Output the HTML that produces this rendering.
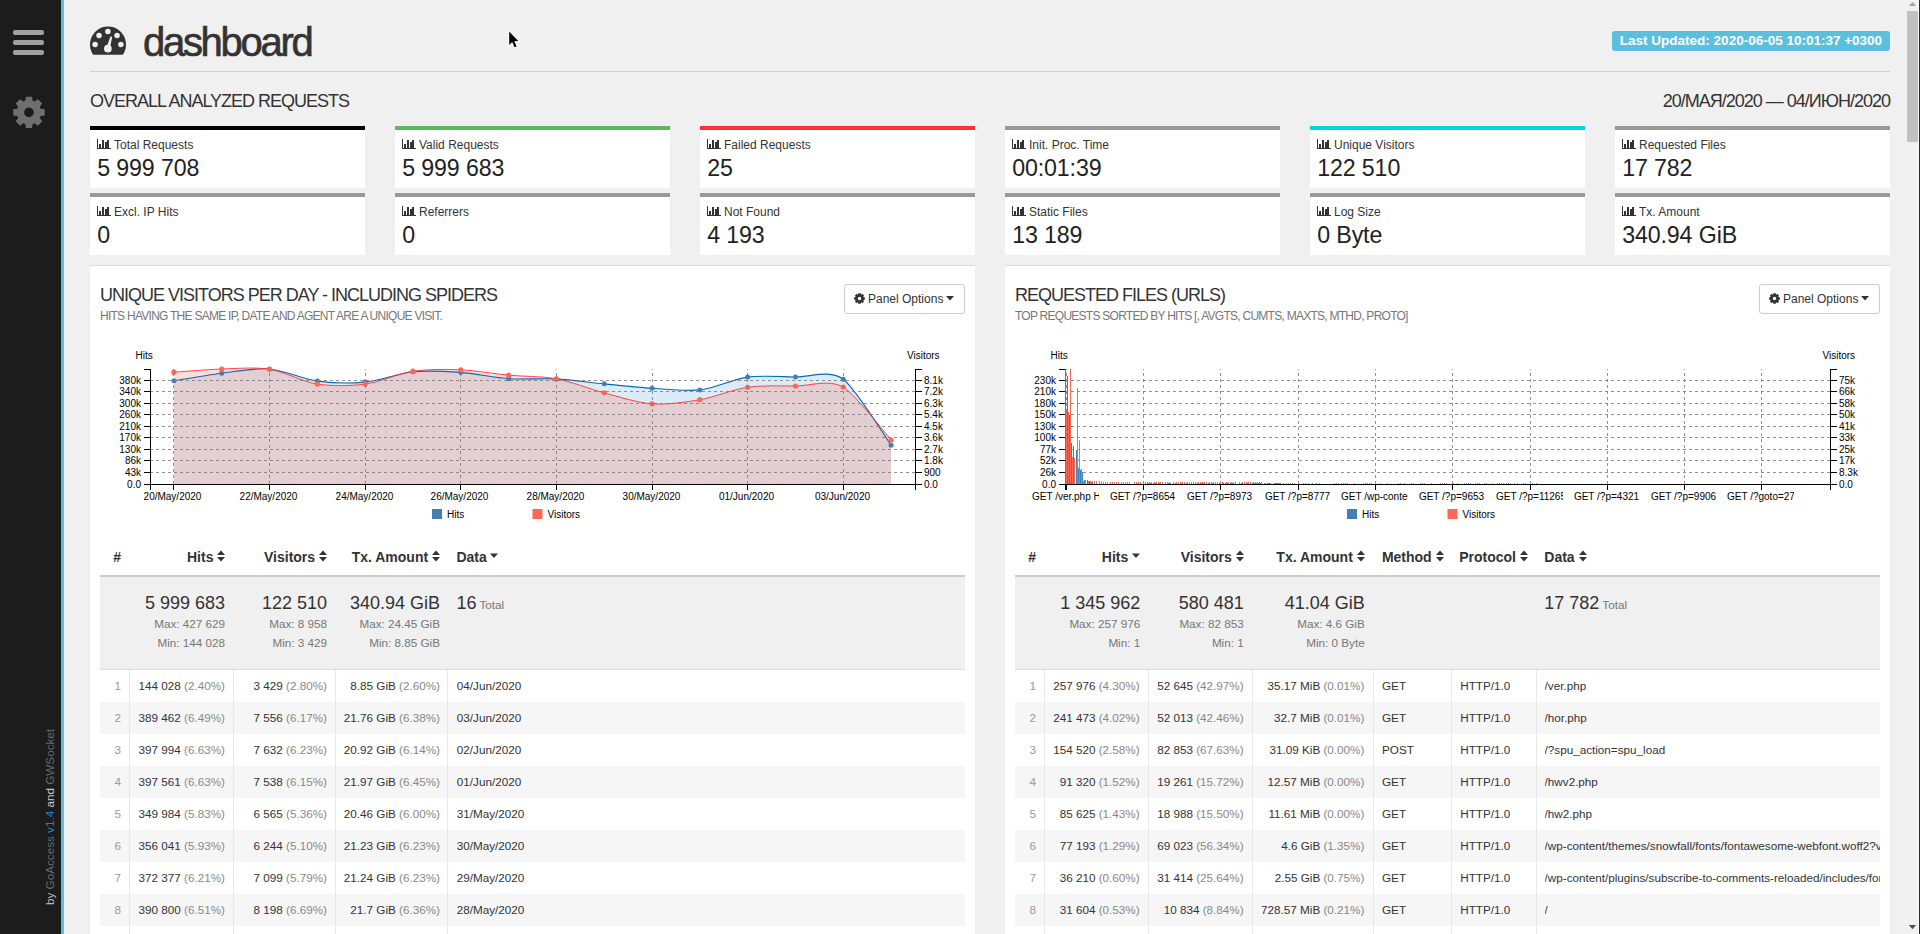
<!DOCTYPE html><html><head><meta charset="utf-8"><style>
*{box-sizing:border-box;margin:0;padding:0}
html,body{width:1920px;height:934px;overflow:hidden;background:#f0f0f0;font-family:"Liberation Sans", sans-serif;color:#333}
.abs{position:absolute}
.sb{position:absolute;left:0;top:0;width:61px;height:934px;background:#1c1c1c}
.sbb{position:absolute;left:61px;top:0;width:3px;height:934px;background:#5bc0de}
.bar{position:absolute;left:13px;width:31px;height:5px;border-radius:2px;background:#a0a0a0}
.card{position:absolute;width:275px;height:62px;background:#fff;border-top:4px solid #999}
.cl{position:absolute;left:24px;top:8px;font-size:12px;line-height:14px;color:#333;white-space:nowrap}
.bi{position:absolute;left:7px;top:9px}
.cv{position:absolute;left:7.2px;top:22.6px;font-size:23.2px;letter-spacing:-0.12px;line-height:30px;color:#222;white-space:nowrap}
.panel{position:absolute;top:265px;width:885px;height:700px;background:#fff;border-top:1px solid #ddd}
.ptitle{position:absolute;left:10px;top:19px;font-size:18px;letter-spacing:-1px;color:#333;white-space:nowrap}
.psub{position:absolute;left:10px;top:43px;font-size:12px;letter-spacing:-0.74px;color:#777;white-space:nowrap}
.btn{position:absolute;top:18px;width:121px;height:30px;border:1px solid #ccc;border-radius:3px;font-size:12px;line-height:28px;padding-left:9px;color:#333;white-space:nowrap}
.g{stroke:#777;stroke-dasharray:3,3;stroke-width:1;opacity:.8}
.ax{stroke:#000;fill:none;stroke-width:1}
.t{font-family:"Liberation Sans", sans-serif;font-size:10px;fill:#000}
.xl{position:absolute;top:490px;width:67px;height:14px;overflow:hidden;font-size:10px;line-height:14px;text-align:center;white-space:nowrap;color:#000}
.tbl{position:absolute;top:535px;height:400px}
.th{position:absolute;top:13px;font-size:13px;font-weight:bold;line-height:16px;white-space:nowrap;color:#333}
.srt{vertical-align:0px}
.tx{position:absolute;line-height:1;white-space:nowrap;color:#333}
.b{font-weight:bold}
.mut{color:#888}
.mx{color:#777}
</style></head><body>

<div class="sb"></div><div class="sbb"></div>
<div class="bar" style="top:30px"></div><div class="bar" style="top:40px"></div><div class="bar" style="top:50px"></div>
<svg class="abs" style="left:0;top:0" width="61" height="140"><path fill-rule="evenodd" fill="#6f6f6f" d="M25.25,100.80 L25.90,96.70 L32.00,96.70 L32.65,100.80 L34.54,101.58 L37.89,99.14 L42.21,103.46 L39.77,106.81 L40.55,108.70 L44.65,109.35 L44.65,115.45 L40.55,116.10 L39.77,117.99 L42.21,121.34 L37.89,125.66 L34.54,123.22 L32.65,124.00 L32.00,128.10 L25.90,128.10 L25.25,124.00 L23.36,123.22 L20.01,125.66 L15.69,121.34 L18.13,117.99 L17.35,116.10 L13.25,115.45 L13.25,109.35 L17.35,108.70 L18.13,106.81 L15.69,103.46 L20.01,99.14 L23.36,101.58Z M24.10,112.40 a4.85,4.85 0 1,0 9.70,0 a4.85,4.85 0 1,0 -9.70,0Z"/></svg>
<div class="abs" style="left:44px;top:905px;transform:rotate(-90deg);transform-origin:0 0;font-size:11.7px;line-height:12px;white-space:nowrap;color:#bbb">by <span style="color:#6a6a6a">GoAccess</span> <span style="color:#2a80d0">v1.4</span> <span style="color:#ccc">and</span> <span style="color:#6a6a6a">GWSocket</span></div>
<svg class="abs" style="left:0;top:0" width="140" height="70"><path fill="#333" d="M93.1,54.7 A18,18 0 1,1 122.9,54.7 Z"/>
<g fill="#f0f0f0"><circle cx="107.9" cy="31.6" r="2.75"/><circle cx="99.06" cy="35.6" r="2.75"/><circle cx="117.05" cy="35.6" r="2.75"/><circle cx="95.1" cy="44.6" r="2.75"/><circle cx="120.9" cy="44.6" r="2.75"/><circle cx="107.9" cy="48.7" r="3.85"/><path d="M106.2,48.5 L110.4,36.4 L112.2,36.8 L109.8,48.8Z"/></g></svg>
<div class="abs" style="left:143px;top:17px;font-size:40px;line-height:46px;letter-spacing:-2.3px;-webkit-text-stroke:0.65px #333;margin-top:1.5px;color:#333">dashboard</div>
<div class="abs" style="left:90px;top:71px;width:1800px;height:1px;background:#d0d0d0"></div>
<div class="abs" style="left:1612px;top:31px;width:278px;height:20px;border-radius:3px;background:#5bc0de;color:#fff;font-weight:bold;font-size:13.5px;line-height:20px;text-align:center;white-space:nowrap">Last Updated: 2020-06-05 10:01:37 +0300</div>
<div class="abs" style="left:90px;top:91px;font-size:18px;line-height:20px;letter-spacing:-1px;color:#333;white-space:nowrap">OVERALL ANALYZED REQUESTS</div>
<div class="abs" style="right:30px;top:91px;font-size:18px;line-height:20px;letter-spacing:-1px;color:#333;white-space:nowrap">20/МАЯ/2020 — 04/ИЮН/2020</div>
<div class="card" style="left:90px;top:126px;border-top-color:#000"><svg class="bi" width="15" height="11" viewBox="0 0 15 11" shape-rendering="crispEdges"><rect x="0" y="0" width="1" height="10" fill="#333"/><rect x="0" y="9" width="14" height="1" fill="#333"/><rect x="2" y="5" width="2" height="4" fill="#333"/><rect x="5" y="1.4" width="2" height="7.6" fill="#333"/><rect x="7.6" y="3" width="2" height="6" fill="#333"/><rect x="10" y="1" width="2" height="8" fill="#333"/></svg><div class="cl">Total Requests</div><div class="cv">5 999 708</div></div>
<div class="card" style="left:395px;top:126px;border-top-color:#5cb85c"><svg class="bi" width="15" height="11" viewBox="0 0 15 11" shape-rendering="crispEdges"><rect x="0" y="0" width="1" height="10" fill="#333"/><rect x="0" y="9" width="14" height="1" fill="#333"/><rect x="2" y="5" width="2" height="4" fill="#333"/><rect x="5" y="1.4" width="2" height="7.6" fill="#333"/><rect x="7.6" y="3" width="2" height="6" fill="#333"/><rect x="10" y="1" width="2" height="8" fill="#333"/></svg><div class="cl">Valid Requests</div><div class="cv">5 999 683</div></div>
<div class="card" style="left:700px;top:126px;border-top-color:#ff303e"><svg class="bi" width="15" height="11" viewBox="0 0 15 11" shape-rendering="crispEdges"><rect x="0" y="0" width="1" height="10" fill="#333"/><rect x="0" y="9" width="14" height="1" fill="#333"/><rect x="2" y="5" width="2" height="4" fill="#333"/><rect x="5" y="1.4" width="2" height="7.6" fill="#333"/><rect x="7.6" y="3" width="2" height="6" fill="#333"/><rect x="10" y="1" width="2" height="8" fill="#333"/></svg><div class="cl">Failed Requests</div><div class="cv">25</div></div>
<div class="card" style="left:1005px;top:126px;border-top-color:#999"><svg class="bi" width="15" height="11" viewBox="0 0 15 11" shape-rendering="crispEdges"><rect x="0" y="0" width="1" height="10" fill="#333"/><rect x="0" y="9" width="14" height="1" fill="#333"/><rect x="2" y="5" width="2" height="4" fill="#333"/><rect x="5" y="1.4" width="2" height="7.6" fill="#333"/><rect x="7.6" y="3" width="2" height="6" fill="#333"/><rect x="10" y="1" width="2" height="8" fill="#333"/></svg><div class="cl">Init. Proc. Time</div><div class="cv">00:01:39</div></div>
<div class="card" style="left:1310px;top:126px;border-top-color:#00d6e0"><svg class="bi" width="15" height="11" viewBox="0 0 15 11" shape-rendering="crispEdges"><rect x="0" y="0" width="1" height="10" fill="#333"/><rect x="0" y="9" width="14" height="1" fill="#333"/><rect x="2" y="5" width="2" height="4" fill="#333"/><rect x="5" y="1.4" width="2" height="7.6" fill="#333"/><rect x="7.6" y="3" width="2" height="6" fill="#333"/><rect x="10" y="1" width="2" height="8" fill="#333"/></svg><div class="cl">Unique Visitors</div><div class="cv">122 510</div></div>
<div class="card" style="left:1615px;top:126px;border-top-color:#999"><svg class="bi" width="15" height="11" viewBox="0 0 15 11" shape-rendering="crispEdges"><rect x="0" y="0" width="1" height="10" fill="#333"/><rect x="0" y="9" width="14" height="1" fill="#333"/><rect x="2" y="5" width="2" height="4" fill="#333"/><rect x="5" y="1.4" width="2" height="7.6" fill="#333"/><rect x="7.6" y="3" width="2" height="6" fill="#333"/><rect x="10" y="1" width="2" height="8" fill="#333"/></svg><div class="cl">Requested Files</div><div class="cv">17 782</div></div>
<div class="card" style="left:90px;top:193px;border-top-color:#999"><svg class="bi" width="15" height="11" viewBox="0 0 15 11" shape-rendering="crispEdges"><rect x="0" y="0" width="1" height="10" fill="#333"/><rect x="0" y="9" width="14" height="1" fill="#333"/><rect x="2" y="5" width="2" height="4" fill="#333"/><rect x="5" y="1.4" width="2" height="7.6" fill="#333"/><rect x="7.6" y="3" width="2" height="6" fill="#333"/><rect x="10" y="1" width="2" height="8" fill="#333"/></svg><div class="cl">Excl. IP Hits</div><div class="cv">0</div></div>
<div class="card" style="left:395px;top:193px;border-top-color:#999"><svg class="bi" width="15" height="11" viewBox="0 0 15 11" shape-rendering="crispEdges"><rect x="0" y="0" width="1" height="10" fill="#333"/><rect x="0" y="9" width="14" height="1" fill="#333"/><rect x="2" y="5" width="2" height="4" fill="#333"/><rect x="5" y="1.4" width="2" height="7.6" fill="#333"/><rect x="7.6" y="3" width="2" height="6" fill="#333"/><rect x="10" y="1" width="2" height="8" fill="#333"/></svg><div class="cl">Referrers</div><div class="cv">0</div></div>
<div class="card" style="left:700px;top:193px;border-top-color:#999"><svg class="bi" width="15" height="11" viewBox="0 0 15 11" shape-rendering="crispEdges"><rect x="0" y="0" width="1" height="10" fill="#333"/><rect x="0" y="9" width="14" height="1" fill="#333"/><rect x="2" y="5" width="2" height="4" fill="#333"/><rect x="5" y="1.4" width="2" height="7.6" fill="#333"/><rect x="7.6" y="3" width="2" height="6" fill="#333"/><rect x="10" y="1" width="2" height="8" fill="#333"/></svg><div class="cl">Not Found</div><div class="cv">4 193</div></div>
<div class="card" style="left:1005px;top:193px;border-top-color:#999"><svg class="bi" width="15" height="11" viewBox="0 0 15 11" shape-rendering="crispEdges"><rect x="0" y="0" width="1" height="10" fill="#333"/><rect x="0" y="9" width="14" height="1" fill="#333"/><rect x="2" y="5" width="2" height="4" fill="#333"/><rect x="5" y="1.4" width="2" height="7.6" fill="#333"/><rect x="7.6" y="3" width="2" height="6" fill="#333"/><rect x="10" y="1" width="2" height="8" fill="#333"/></svg><div class="cl">Static Files</div><div class="cv">13 189</div></div>
<div class="card" style="left:1310px;top:193px;border-top-color:#999"><svg class="bi" width="15" height="11" viewBox="0 0 15 11" shape-rendering="crispEdges"><rect x="0" y="0" width="1" height="10" fill="#333"/><rect x="0" y="9" width="14" height="1" fill="#333"/><rect x="2" y="5" width="2" height="4" fill="#333"/><rect x="5" y="1.4" width="2" height="7.6" fill="#333"/><rect x="7.6" y="3" width="2" height="6" fill="#333"/><rect x="10" y="1" width="2" height="8" fill="#333"/></svg><div class="cl">Log Size</div><div class="cv">0 Byte</div></div>
<div class="card" style="left:1615px;top:193px;border-top-color:#999"><svg class="bi" width="15" height="11" viewBox="0 0 15 11" shape-rendering="crispEdges"><rect x="0" y="0" width="1" height="10" fill="#333"/><rect x="0" y="9" width="14" height="1" fill="#333"/><rect x="2" y="5" width="2" height="4" fill="#333"/><rect x="5" y="1.4" width="2" height="7.6" fill="#333"/><rect x="7.6" y="3" width="2" height="6" fill="#333"/><rect x="10" y="1" width="2" height="8" fill="#333"/></svg><div class="cl">Tx. Amount</div><div class="cv">340.94 GiB</div></div>
<div class="panel" style="left:90px"><div class="ptitle">UNIQUE VISITORS PER DAY - INCLUDING SPIDERS</div><div class="psub">HITS HAVING THE SAME IP, DATE AND AGENT ARE A UNIQUE VISIT.</div><div class="btn" style="left:754px"><svg width="11" height="11" viewBox="0 0 11 11" style="vertical-align:-1px;margin-right:3px"><path fill-rule="evenodd" fill="#333" d="M4.00,1.70 L4.20,0.20 L6.80,0.20 L7.00,1.70 L7.13,1.75 L8.33,0.83 L10.17,2.67 L9.25,3.87 L9.30,4.00 L10.80,4.20 L10.80,6.80 L9.30,7.00 L9.25,7.13 L10.17,8.33 L8.33,10.17 L7.13,9.25 L7.00,9.30 L6.80,10.80 L4.20,10.80 L4.00,9.30 L3.87,9.25 L2.67,10.17 L0.83,8.33 L1.75,7.13 L1.70,7.00 L0.20,6.80 L0.20,4.20 L1.70,4.00 L1.75,3.87 L0.83,2.67 L2.67,0.83 L3.87,1.75Z M3.80,5.50 a1.70,1.70 0 1,0 3.40,0 a1.70,1.70 0 1,0 -3.40,0Z"/></svg>Panel Options<svg width="8" height="5" viewBox="0 0 8 5" style="vertical-align:2px;margin-left:3px"><path d="M0,0 L8,0 L4,4.5Z" fill="#333"/></svg></div></div>
<div class="panel" style="left:1005px"><div class="ptitle">REQUESTED FILES (URLS)</div><div class="psub">TOP REQUESTS SORTED BY HITS [, AVGTS, CUMTS, MAXTS, MTHD, PROTO]</div><div class="btn" style="left:754px"><svg width="11" height="11" viewBox="0 0 11 11" style="vertical-align:-1px;margin-right:3px"><path fill-rule="evenodd" fill="#333" d="M4.00,1.70 L4.20,0.20 L6.80,0.20 L7.00,1.70 L7.13,1.75 L8.33,0.83 L10.17,2.67 L9.25,3.87 L9.30,4.00 L10.80,4.20 L10.80,6.80 L9.30,7.00 L9.25,7.13 L10.17,8.33 L8.33,10.17 L7.13,9.25 L7.00,9.30 L6.80,10.80 L4.20,10.80 L4.00,9.30 L3.87,9.25 L2.67,10.17 L0.83,8.33 L1.75,7.13 L1.70,7.00 L0.20,6.80 L0.20,4.20 L1.70,4.00 L1.75,3.87 L0.83,2.67 L2.67,0.83 L3.87,1.75Z M3.80,5.50 a1.70,1.70 0 1,0 3.40,0 a1.70,1.70 0 1,0 -3.40,0Z"/></svg>Panel Options<svg width="8" height="5" viewBox="0 0 8 5" style="vertical-align:2px;margin-left:3px"><path d="M0,0 L8,0 L4,4.5Z" fill="#333"/></svg></div></div>
<svg style="position:absolute;left:0;top:0" width="1920" height="934">
<path d="M173.91,380.71Q212.16,374.37 221.72,373.20C236.06,371.45 255.19,367.81 269.53,369.00C283.88,370.19 303.00,379.14 317.34,381.11C331.69,383.08 350.81,383.50 365.16,382.10C379.50,380.71 398.62,373.26 412.97,371.80C427.31,370.35 446.44,371.36 460.78,372.40C475.12,373.43 494.25,377.71 508.59,378.69C522.94,379.67 542.06,378.13 556.41,378.90C570.75,379.68 589.88,382.46 604.22,383.86C618.56,385.26 637.69,387.35 652.03,388.25C666.38,389.16 685.50,391.56 699.84,389.88C714.19,388.21 733.31,379.02 747.66,377.09C762.00,375.15 781.12,376.64 795.47,376.97C809.81,377.30 828.94,369.02 843.28,379.26Q852.84,386.09 891.09,445.27L891.09,484L173.91,484Z" fill="#007BC3" fill-opacity="0.14"/>
<path d="M173.91,372.20Q212.16,369.30 221.72,369.00C236.06,368.56 255.19,366.97 269.53,369.23C283.88,371.50 303.00,381.87 317.34,384.10C331.69,386.33 350.81,386.03 365.16,384.10C379.50,382.16 398.62,373.34 412.97,371.20C427.31,369.05 446.44,369.20 460.78,369.80C475.12,370.40 494.25,373.86 508.59,375.20C522.94,376.54 542.06,376.11 556.41,378.76C570.75,381.41 589.88,389.10 604.22,392.87C618.56,396.63 637.69,402.81 652.03,403.84C666.38,404.87 685.50,402.21 699.84,399.72C714.19,397.23 733.31,389.28 747.66,387.23C762.00,385.17 781.12,386.06 795.47,386.02C809.81,385.99 828.94,378.90 843.28,387.00Q852.84,392.39 891.09,439.98L891.09,484L173.91,484Z" fill="#FF6854" fill-opacity="0.22"/>
<path d="M173.91,380.71Q212.16,374.37 221.72,373.20C236.06,371.45 255.19,367.81 269.53,369.00C283.88,370.19 303.00,379.14 317.34,381.11C331.69,383.08 350.81,383.50 365.16,382.10C379.50,380.71 398.62,373.26 412.97,371.80C427.31,370.35 446.44,371.36 460.78,372.40C475.12,373.43 494.25,377.71 508.59,378.69C522.94,379.67 542.06,378.13 556.41,378.90C570.75,379.68 589.88,382.46 604.22,383.86C618.56,385.26 637.69,387.35 652.03,388.25C666.38,389.16 685.50,391.56 699.84,389.88C714.19,388.21 733.31,379.02 747.66,377.09C762.00,375.15 781.12,376.64 795.47,376.97C809.81,377.30 828.94,369.02 843.28,379.26Q852.84,386.09 891.09,445.27" fill="none" stroke="#0868b8" stroke-width="1.1"/>
<path d="M173.91,372.20Q212.16,369.30 221.72,369.00C236.06,368.56 255.19,366.97 269.53,369.23C283.88,371.50 303.00,381.87 317.34,384.10C331.69,386.33 350.81,386.03 365.16,384.10C379.50,382.16 398.62,373.34 412.97,371.20C427.31,369.05 446.44,369.20 460.78,369.80C475.12,370.40 494.25,373.86 508.59,375.20C522.94,376.54 542.06,376.11 556.41,378.76C570.75,381.41 589.88,389.10 604.22,392.87C618.56,396.63 637.69,402.81 652.03,403.84C666.38,404.87 685.50,402.21 699.84,399.72C714.19,397.23 733.31,389.28 747.66,387.23C762.00,385.17 781.12,386.06 795.47,386.02C809.81,385.99 828.94,378.90 843.28,387.00Q852.84,392.39 891.09,439.98" fill="none" stroke="#FF303E" stroke-width="1" stroke-opacity=".9"/>
<circle cx="173.91" cy="380.71" r="2.5" fill="#447FB3"/>
<circle cx="221.72" cy="373.20" r="2.5" fill="#447FB3"/>
<circle cx="269.53" cy="369.00" r="2.5" fill="#447FB3"/>
<circle cx="317.34" cy="381.11" r="2.5" fill="#447FB3"/>
<circle cx="365.16" cy="382.10" r="2.5" fill="#447FB3"/>
<circle cx="412.97" cy="371.80" r="2.5" fill="#447FB3"/>
<circle cx="460.78" cy="372.40" r="2.5" fill="#447FB3"/>
<circle cx="508.59" cy="378.69" r="2.5" fill="#447FB3"/>
<circle cx="556.41" cy="378.90" r="2.5" fill="#447FB3"/>
<circle cx="604.22" cy="383.86" r="2.5" fill="#447FB3"/>
<circle cx="652.03" cy="388.25" r="2.5" fill="#447FB3"/>
<circle cx="699.84" cy="389.88" r="2.5" fill="#447FB3"/>
<circle cx="747.66" cy="377.09" r="2.5" fill="#447FB3"/>
<circle cx="795.47" cy="376.97" r="2.5" fill="#447FB3"/>
<circle cx="843.28" cy="379.26" r="2.5" fill="#447FB3"/>
<circle cx="891.09" cy="445.27" r="2.5" fill="#447FB3"/>
<circle cx="173.91" cy="372.20" r="2.6" fill="#FF6854"/>
<circle cx="221.72" cy="369.00" r="2.6" fill="#FF6854"/>
<circle cx="269.53" cy="369.23" r="2.6" fill="#FF6854"/>
<circle cx="317.34" cy="384.10" r="2.6" fill="#FF6854"/>
<circle cx="365.16" cy="384.10" r="2.6" fill="#FF6854"/>
<circle cx="412.97" cy="371.20" r="2.6" fill="#FF6854"/>
<circle cx="460.78" cy="369.80" r="2.6" fill="#FF6854"/>
<circle cx="508.59" cy="375.20" r="2.6" fill="#FF6854"/>
<circle cx="556.41" cy="378.76" r="2.6" fill="#FF6854"/>
<circle cx="604.22" cy="392.87" r="2.6" fill="#FF6854"/>
<circle cx="652.03" cy="403.84" r="2.6" fill="#FF6854"/>
<circle cx="699.84" cy="399.72" r="2.6" fill="#FF6854"/>
<circle cx="747.66" cy="387.23" r="2.6" fill="#FF6854"/>
<circle cx="795.47" cy="386.02" r="2.6" fill="#FF6854"/>
<circle cx="843.28" cy="387.00" r="2.6" fill="#FF6854"/>
<circle cx="891.09" cy="439.98" r="2.6" fill="#FF6854"/>
<g shape-rendering="crispEdges">
<line x1="150" y1="472.5" x2="915" y2="472.5" class="g"/>
<line x1="150" y1="460.5" x2="915" y2="460.5" class="g"/>
<line x1="150" y1="449.5" x2="915" y2="449.5" class="g"/>
<line x1="150" y1="437.5" x2="915" y2="437.5" class="g"/>
<line x1="150" y1="426.5" x2="915" y2="426.5" class="g"/>
<line x1="150" y1="414.5" x2="915" y2="414.5" class="g"/>
<line x1="150" y1="403.5" x2="915" y2="403.5" class="g"/>
<line x1="150" y1="391.5" x2="915" y2="391.5" class="g"/>
<line x1="150" y1="380.5" x2="915" y2="380.5" class="g"/>
<line x1="173.5" y1="484" x2="173.5" y2="369" class="g"/>
<line x1="269.5" y1="484" x2="269.5" y2="369" class="g"/>
<line x1="365.5" y1="484" x2="365.5" y2="369" class="g"/>
<line x1="460.5" y1="484" x2="460.5" y2="369" class="g"/>
<line x1="556.5" y1="484" x2="556.5" y2="369" class="g"/>
<line x1="652.5" y1="484" x2="652.5" y2="369" class="g"/>
<line x1="747.5" y1="484" x2="747.5" y2="369" class="g"/>
<line x1="843.5" y1="484" x2="843.5" y2="369" class="g"/>
<path d="M144,369.5H150.5V484.5H144" class="ax"/>
<path d="M922,369.5H915.5V484.5H922" class="ax"/>
<path d="M150.5,490V484.5H915.5V490" class="ax"/>
<line x1="144" y1="484.5" x2="150" y2="484.5" class="ax"/>
<line x1="916" y1="484.5" x2="922" y2="484.5" class="ax"/>
<line x1="144" y1="472.5" x2="150" y2="472.5" class="ax"/>
<line x1="916" y1="472.5" x2="922" y2="472.5" class="ax"/>
<line x1="144" y1="460.5" x2="150" y2="460.5" class="ax"/>
<line x1="916" y1="460.5" x2="922" y2="460.5" class="ax"/>
<line x1="144" y1="449.5" x2="150" y2="449.5" class="ax"/>
<line x1="916" y1="449.5" x2="922" y2="449.5" class="ax"/>
<line x1="144" y1="437.5" x2="150" y2="437.5" class="ax"/>
<line x1="916" y1="437.5" x2="922" y2="437.5" class="ax"/>
<line x1="144" y1="426.5" x2="150" y2="426.5" class="ax"/>
<line x1="916" y1="426.5" x2="922" y2="426.5" class="ax"/>
<line x1="144" y1="414.5" x2="150" y2="414.5" class="ax"/>
<line x1="916" y1="414.5" x2="922" y2="414.5" class="ax"/>
<line x1="144" y1="403.5" x2="150" y2="403.5" class="ax"/>
<line x1="916" y1="403.5" x2="922" y2="403.5" class="ax"/>
<line x1="144" y1="391.5" x2="150" y2="391.5" class="ax"/>
<line x1="916" y1="391.5" x2="922" y2="391.5" class="ax"/>
<line x1="144" y1="380.5" x2="150" y2="380.5" class="ax"/>
<line x1="916" y1="380.5" x2="922" y2="380.5" class="ax"/>
<line x1="173.5" y1="484" x2="173.5" y2="490" class="ax"/>
<line x1="269.5" y1="484" x2="269.5" y2="490" class="ax"/>
<line x1="365.5" y1="484" x2="365.5" y2="490" class="ax"/>
<line x1="460.5" y1="484" x2="460.5" y2="490" class="ax"/>
<line x1="556.5" y1="484" x2="556.5" y2="490" class="ax"/>
<line x1="652.5" y1="484" x2="652.5" y2="490" class="ax"/>
<line x1="747.5" y1="484" x2="747.5" y2="490" class="ax"/>
<line x1="843.5" y1="484" x2="843.5" y2="490" class="ax"/>
</g>
<text x="141.0" y="488.0" text-anchor="end" class="t">0.0</text>
<text x="924.0" y="488.0" class="t">0.0</text>
<text x="141.0" y="476.0" text-anchor="end" class="t">43k</text>
<text x="924.0" y="476.0" class="t">900</text>
<text x="141.0" y="464.0" text-anchor="end" class="t">86k</text>
<text x="924.0" y="464.0" class="t">1.8k</text>
<text x="141.0" y="453.0" text-anchor="end" class="t">130k</text>
<text x="924.0" y="453.0" class="t">2.7k</text>
<text x="141.0" y="441.0" text-anchor="end" class="t">170k</text>
<text x="924.0" y="441.0" class="t">3.6k</text>
<text x="141.0" y="430.0" text-anchor="end" class="t">210k</text>
<text x="924.0" y="430.0" class="t">4.5k</text>
<text x="141.0" y="418.0" text-anchor="end" class="t">260k</text>
<text x="924.0" y="418.0" class="t">5.4k</text>
<text x="141.0" y="407.0" text-anchor="end" class="t">300k</text>
<text x="924.0" y="407.0" class="t">6.3k</text>
<text x="141.0" y="395.0" text-anchor="end" class="t">340k</text>
<text x="924.0" y="395.0" class="t">7.2k</text>
<text x="141.0" y="384.0" text-anchor="end" class="t">380k</text>
<text x="924.0" y="384.0" class="t">8.1k</text>
<text x="172.5" y="500" text-anchor="middle" class="t">20/May/2020</text>
<text x="268.5" y="500" text-anchor="middle" class="t">22/May/2020</text>
<text x="364.5" y="500" text-anchor="middle" class="t">24/May/2020</text>
<text x="459.5" y="500" text-anchor="middle" class="t">26/May/2020</text>
<text x="555.5" y="500" text-anchor="middle" class="t">28/May/2020</text>
<text x="651.5" y="500" text-anchor="middle" class="t">30/May/2020</text>
<text x="746.5" y="500" text-anchor="middle" class="t">01/Jun/2020</text>
<text x="842.5" y="500" text-anchor="middle" class="t">03/Jun/2020</text>
<text x="135.5" y="359" class="t">Hits</text>
<text x="907" y="359" class="t">Visitors</text>
<rect x="432" y="509" width="10" height="10" fill="#447FB3"/><text x="447" y="518" class="t">Hits</text>
<rect x="532.5" y="509" width="10" height="10" fill="#FF6854"/><text x="547.5" y="518" class="t">Visitors</text>
</svg>
<svg style="position:absolute;left:0;top:0" width="1920" height="934">
<g shape-rendering="crispEdges">
<line x1="1065" y1="472.5" x2="1830" y2="472.5" class="g"/>
<line x1="1065" y1="460.5" x2="1830" y2="460.5" class="g"/>
<line x1="1065" y1="449.5" x2="1830" y2="449.5" class="g"/>
<line x1="1065" y1="437.5" x2="1830" y2="437.5" class="g"/>
<line x1="1065" y1="426.5" x2="1830" y2="426.5" class="g"/>
<line x1="1065" y1="414.5" x2="1830" y2="414.5" class="g"/>
<line x1="1065" y1="403.5" x2="1830" y2="403.5" class="g"/>
<line x1="1065" y1="391.5" x2="1830" y2="391.5" class="g"/>
<line x1="1065" y1="380.5" x2="1830" y2="380.5" class="g"/>
<line x1="1143.5" y1="484" x2="1143.5" y2="369" class="g"/>
<line x1="1220.5" y1="484" x2="1220.5" y2="369" class="g"/>
<line x1="1298.5" y1="484" x2="1298.5" y2="369" class="g"/>
<line x1="1375.5" y1="484" x2="1375.5" y2="369" class="g"/>
<line x1="1452.5" y1="484" x2="1452.5" y2="369" class="g"/>
<line x1="1530.5" y1="484" x2="1530.5" y2="369" class="g"/>
<line x1="1607.5" y1="484" x2="1607.5" y2="369" class="g"/>
<line x1="1684.5" y1="484" x2="1684.5" y2="369" class="g"/>
<line x1="1761.5" y1="484" x2="1761.5" y2="369" class="g"/>
<path d="M1059,369.5H1065.5V484.5H1059" class="ax"/>
<path d="M1837,369.5H1830.5V484.5H1837" class="ax"/>
<path d="M1065.5,490V484.5H1830.5V490" class="ax"/>
<line x1="1059" y1="484.5" x2="1065" y2="484.5" class="ax"/>
<line x1="1831" y1="484.5" x2="1837" y2="484.5" class="ax"/>
<line x1="1059" y1="472.5" x2="1065" y2="472.5" class="ax"/>
<line x1="1831" y1="472.5" x2="1837" y2="472.5" class="ax"/>
<line x1="1059" y1="460.5" x2="1065" y2="460.5" class="ax"/>
<line x1="1831" y1="460.5" x2="1837" y2="460.5" class="ax"/>
<line x1="1059" y1="449.5" x2="1065" y2="449.5" class="ax"/>
<line x1="1831" y1="449.5" x2="1837" y2="449.5" class="ax"/>
<line x1="1059" y1="437.5" x2="1065" y2="437.5" class="ax"/>
<line x1="1831" y1="437.5" x2="1837" y2="437.5" class="ax"/>
<line x1="1059" y1="426.5" x2="1065" y2="426.5" class="ax"/>
<line x1="1831" y1="426.5" x2="1837" y2="426.5" class="ax"/>
<line x1="1059" y1="414.5" x2="1065" y2="414.5" class="ax"/>
<line x1="1831" y1="414.5" x2="1837" y2="414.5" class="ax"/>
<line x1="1059" y1="403.5" x2="1065" y2="403.5" class="ax"/>
<line x1="1831" y1="403.5" x2="1837" y2="403.5" class="ax"/>
<line x1="1059" y1="391.5" x2="1065" y2="391.5" class="ax"/>
<line x1="1831" y1="391.5" x2="1837" y2="391.5" class="ax"/>
<line x1="1059" y1="380.5" x2="1065" y2="380.5" class="ax"/>
<line x1="1831" y1="380.5" x2="1837" y2="380.5" class="ax"/>
<line x1="1066.5" y1="484" x2="1066.5" y2="490" class="ax"/>
<line x1="1143.5" y1="484" x2="1143.5" y2="490" class="ax"/>
<line x1="1220.5" y1="484" x2="1220.5" y2="490" class="ax"/>
<line x1="1298.5" y1="484" x2="1298.5" y2="490" class="ax"/>
<line x1="1375.5" y1="484" x2="1375.5" y2="490" class="ax"/>
<line x1="1452.5" y1="484" x2="1452.5" y2="490" class="ax"/>
<line x1="1530.5" y1="484" x2="1530.5" y2="490" class="ax"/>
<line x1="1607.5" y1="484" x2="1607.5" y2="490" class="ax"/>
<line x1="1684.5" y1="484" x2="1684.5" y2="490" class="ax"/>
<line x1="1761.5" y1="484" x2="1761.5" y2="490" class="ax"/>
</g>
<g shape-rendering="crispEdges"><line x1="1066.5" y1="484" x2="1066.5" y2="369" class="g"/></g>
<g shape-rendering="crispEdges">
<rect x="1065.00" y="369.00" width="1" height="115.00" fill="#447FB3"/>
<rect x="1066.00" y="410.93" width="1" height="73.07" fill="#FF6854"/>
<rect x="1067.00" y="376.36" width="1" height="107.64" fill="#447FB3"/>
<rect x="1068.00" y="411.81" width="1" height="72.19" fill="#FF6854"/>
<rect x="1069.00" y="415.12" width="1" height="68.88" fill="#447FB3"/>
<rect x="1070.00" y="369.00" width="1" height="115.00" fill="#FF6854"/>
<rect x="1071.00" y="443.29" width="1" height="40.71" fill="#447FB3"/>
<rect x="1072.00" y="457.27" width="1" height="26.73" fill="#FF6854"/>
<rect x="1073.00" y="445.83" width="1" height="38.17" fill="#447FB3"/>
<rect x="1074.00" y="457.64" width="1" height="26.36" fill="#FF6854"/>
<rect x="1076.00" y="449.59" width="1" height="34.41" fill="#447FB3"/>
<rect x="1077.00" y="388.20" width="1" height="95.80" fill="#FF6854"/>
<rect x="1078.00" y="467.86" width="1" height="16.14" fill="#447FB3"/>
<rect x="1079.00" y="440.40" width="1" height="43.60" fill="#FF6854"/>
<rect x="1080.00" y="469.91" width="1" height="14.09" fill="#447FB3"/>
<rect x="1081.00" y="468.96" width="1" height="15.04" fill="#FF6854"/>
<rect x="1082.00" y="472.10" width="1" height="11.90" fill="#447FB3"/>
<rect x="1083.00" y="481.22" width="1" height="2.78" fill="#FF6854"/>
<rect x="1084.00" y="479.99" width="1" height="4.01" fill="#447FB3"/>
<rect x="1085.00" y="479.84" width="1" height="4.16" fill="#FF6854"/>
<rect x="1088.00" y="480.50" width="1" height="3.50" fill="#FF6854"/>
<rect x="1087.00" y="480.00" width="1" height="4.00" fill="#447FB3"/>
<rect x="1090.00" y="480.50" width="1" height="3.50" fill="#FF6854"/>
<rect x="1089.00" y="481.00" width="1" height="3.00" fill="#447FB3"/>
<rect x="1092.00" y="480.50" width="1" height="3.50" fill="#FF6854"/>
<rect x="1091.00" y="482.00" width="1" height="2.00" fill="#447FB3"/>
<rect x="1094.00" y="480.50" width="1" height="3.50" fill="#FF6854"/>
<rect x="1096.00" y="480.50" width="1" height="3.50" fill="#FF6854"/>
<rect x="1099.00" y="480.50" width="1" height="3.50" fill="#FF6854"/>
<rect x="1101.00" y="480.50" width="1" height="3.50" fill="#FF6854"/>
<rect x="1103.00" y="481.80" width="1" height="2.20" fill="#FF6854"/>
<rect x="1105.00" y="481.80" width="1" height="2.20" fill="#FF6854"/>
<rect x="1107.00" y="481.80" width="1" height="2.20" fill="#FF6854"/>
<rect x="1110.00" y="481.80" width="1" height="2.20" fill="#FF6854"/>
<rect x="1112.00" y="481.80" width="1" height="2.20" fill="#FF6854"/>
<rect x="1114.00" y="481.80" width="1" height="2.20" fill="#FF6854"/>
<rect x="1116.00" y="481.80" width="1" height="2.20" fill="#FF6854"/>
<rect x="1118.00" y="481.80" width="1" height="2.20" fill="#FF6854"/>
<rect x="1121.00" y="481.80" width="1" height="2.20" fill="#FF6854"/>
<rect x="1123.00" y="481.80" width="1" height="2.20" fill="#FF6854"/>
<rect x="1125.00" y="481.80" width="1" height="2.20" fill="#FF6854"/>
<rect x="1127.00" y="481.80" width="1" height="2.20" fill="#FF6854"/>
<rect x="1129.00" y="481.80" width="1" height="2.20" fill="#FF6854"/>
<rect x="1134.00" y="481.80" width="1" height="2.20" fill="#FF6854"/>
<rect x="1136.00" y="481.80" width="1" height="2.20" fill="#FF6854"/>
<rect x="1138.00" y="481.80" width="1" height="2.20" fill="#FF6854"/>
<rect x="1140.00" y="481.80" width="1" height="2.20" fill="#FF6854"/>
<rect x="1143.00" y="481.80" width="1" height="2.20" fill="#FF6854"/>
<rect x="1145.00" y="482.40" width="1" height="1.60" fill="#FF6854"/>
<rect x="1147.00" y="482.40" width="1" height="1.60" fill="#FF6854"/>
<rect x="1149.00" y="482.40" width="1" height="1.60" fill="#FF6854"/>
<rect x="1148.00" y="482.80" width="1" height="1.20" fill="#447FB3"/>
<rect x="1151.00" y="482.40" width="1" height="1.60" fill="#FF6854"/>
<rect x="1150.00" y="482.80" width="1" height="1.20" fill="#447FB3"/>
<rect x="1154.00" y="482.40" width="1" height="1.60" fill="#FF6854"/>
<rect x="1153.00" y="482.80" width="1" height="1.20" fill="#447FB3"/>
<rect x="1156.00" y="482.40" width="1" height="1.60" fill="#FF6854"/>
<rect x="1155.00" y="482.80" width="1" height="1.20" fill="#447FB3"/>
<rect x="1158.00" y="482.40" width="1" height="1.60" fill="#FF6854"/>
<rect x="1160.00" y="482.40" width="1" height="1.60" fill="#FF6854"/>
<rect x="1159.00" y="482.80" width="1" height="1.20" fill="#447FB3"/>
<rect x="1162.00" y="482.40" width="1" height="1.60" fill="#FF6854"/>
<rect x="1165.00" y="482.40" width="1" height="1.60" fill="#FF6854"/>
<rect x="1167.00" y="482.40" width="1" height="1.60" fill="#FF6854"/>
<rect x="1169.00" y="482.40" width="1" height="1.60" fill="#FF6854"/>
<rect x="1168.00" y="482.80" width="1" height="1.20" fill="#447FB3"/>
<rect x="1170.00" y="482.80" width="1" height="1.20" fill="#447FB3"/>
<rect x="1173.00" y="482.40" width="1" height="1.60" fill="#FF6854"/>
<rect x="1176.00" y="482.40" width="1" height="1.60" fill="#FF6854"/>
<rect x="1175.00" y="482.80" width="1" height="1.20" fill="#447FB3"/>
<rect x="1178.00" y="482.40" width="1" height="1.60" fill="#FF6854"/>
<rect x="1180.00" y="482.40" width="1" height="1.60" fill="#FF6854"/>
<rect x="1182.00" y="482.40" width="1" height="1.60" fill="#FF6854"/>
<rect x="1181.00" y="482.80" width="1" height="1.20" fill="#447FB3"/>
<rect x="1184.00" y="482.40" width="1" height="1.60" fill="#FF6854"/>
<rect x="1187.00" y="482.40" width="1" height="1.60" fill="#FF6854"/>
<rect x="1186.00" y="482.80" width="1" height="1.20" fill="#447FB3"/>
<rect x="1189.00" y="482.40" width="1" height="1.60" fill="#FF6854"/>
<rect x="1191.00" y="482.40" width="1" height="1.60" fill="#FF6854"/>
<rect x="1193.00" y="482.40" width="1" height="1.60" fill="#FF6854"/>
<rect x="1195.00" y="482.40" width="1" height="1.60" fill="#FF6854"/>
<rect x="1198.00" y="482.40" width="1" height="1.60" fill="#FF6854"/>
<rect x="1197.00" y="482.80" width="1" height="1.20" fill="#447FB3"/>
<rect x="1200.00" y="482.40" width="1" height="1.60" fill="#FF6854"/>
<rect x="1202.00" y="482.40" width="1" height="1.60" fill="#FF6854"/>
<rect x="1201.00" y="482.80" width="1" height="1.20" fill="#447FB3"/>
<rect x="1204.00" y="482.40" width="1" height="1.60" fill="#FF6854"/>
<rect x="1203.00" y="482.80" width="1" height="1.20" fill="#447FB3"/>
<rect x="1206.00" y="482.40" width="1" height="1.60" fill="#FF6854"/>
<rect x="1209.00" y="482.40" width="1" height="1.60" fill="#FF6854"/>
<rect x="1208.00" y="482.80" width="1" height="1.20" fill="#447FB3"/>
<rect x="1211.00" y="482.40" width="1" height="1.60" fill="#FF6854"/>
<rect x="1213.00" y="482.40" width="1" height="1.60" fill="#FF6854"/>
<rect x="1212.00" y="482.80" width="1" height="1.20" fill="#447FB3"/>
<rect x="1215.00" y="482.40" width="1" height="1.60" fill="#FF6854"/>
<rect x="1217.00" y="482.40" width="1" height="1.60" fill="#FF6854"/>
<rect x="1220.00" y="482.40" width="1" height="1.60" fill="#FF6854"/>
<rect x="1219.00" y="482.80" width="1" height="1.20" fill="#447FB3"/>
<rect x="1222.00" y="482.40" width="1" height="1.60" fill="#FF6854"/>
<rect x="1223.00" y="482.80" width="1" height="1.20" fill="#447FB3"/>
<rect x="1226.00" y="482.40" width="1" height="1.60" fill="#FF6854"/>
<rect x="1225.00" y="482.80" width="1" height="1.20" fill="#447FB3"/>
<rect x="1228.00" y="482.40" width="1" height="1.60" fill="#FF6854"/>
<rect x="1227.00" y="482.80" width="1" height="1.20" fill="#447FB3"/>
<rect x="1231.00" y="482.40" width="1" height="1.60" fill="#FF6854"/>
<rect x="1230.00" y="482.80" width="1" height="1.20" fill="#447FB3"/>
<rect x="1233.00" y="482.40" width="1" height="1.60" fill="#FF6854"/>
<rect x="1232.00" y="482.80" width="1" height="1.20" fill="#447FB3"/>
<rect x="1235.00" y="482.40" width="1" height="1.60" fill="#FF6854"/>
<rect x="1239.00" y="482.40" width="1" height="1.60" fill="#FF6854"/>
<rect x="1242.00" y="482.40" width="1" height="1.60" fill="#FF6854"/>
<rect x="1241.00" y="482.80" width="1" height="1.20" fill="#447FB3"/>
<rect x="1244.00" y="482.40" width="1" height="1.60" fill="#FF6854"/>
<rect x="1246.00" y="482.40" width="1" height="1.60" fill="#FF6854"/>
<rect x="1248.00" y="482.40" width="1" height="1.60" fill="#FF6854"/>
<rect x="1247.00" y="482.80" width="1" height="1.20" fill="#447FB3"/>
<rect x="1250.00" y="482.40" width="1" height="1.60" fill="#FF6854"/>
<rect x="1253.00" y="482.40" width="1" height="1.60" fill="#FF6854"/>
<rect x="1252.00" y="482.80" width="1" height="1.20" fill="#447FB3"/>
<rect x="1255.00" y="482.40" width="1" height="1.60" fill="#FF6854"/>
<rect x="1254.00" y="482.80" width="1" height="1.20" fill="#447FB3"/>
<rect x="1257.00" y="482.40" width="1" height="1.60" fill="#FF6854"/>
<rect x="1256.00" y="482.80" width="1" height="1.20" fill="#447FB3"/>
<rect x="1259.00" y="482.40" width="1" height="1.60" fill="#FF6854"/>
<rect x="1258.00" y="482.80" width="1" height="1.20" fill="#447FB3"/>
<rect x="1261.00" y="482.40" width="1" height="1.60" fill="#FF6854"/>
<rect x="1260.00" y="482.80" width="1" height="1.20" fill="#447FB3"/>
<rect x="1264.00" y="482.80" width="1" height="1.20" fill="#FF6854"/>
<rect x="1265.00" y="482.80" width="1" height="1.20" fill="#447FB3"/>
<rect x="1268.00" y="482.80" width="1" height="1.20" fill="#FF6854"/>
<rect x="1267.00" y="482.80" width="1" height="1.20" fill="#447FB3"/>
<rect x="1270.00" y="482.80" width="1" height="1.20" fill="#FF6854"/>
<rect x="1269.00" y="482.80" width="1" height="1.20" fill="#447FB3"/>
<rect x="1275.00" y="482.80" width="1" height="1.20" fill="#FF6854"/>
<rect x="1274.00" y="482.80" width="1" height="1.20" fill="#447FB3"/>
<rect x="1277.00" y="482.80" width="1" height="1.20" fill="#FF6854"/>
<rect x="1276.00" y="482.80" width="1" height="1.20" fill="#447FB3"/>
<rect x="1279.00" y="482.80" width="1" height="1.20" fill="#FF6854"/>
<rect x="1278.00" y="482.80" width="1" height="1.20" fill="#447FB3"/>
<rect x="1280.00" y="482.80" width="1" height="1.20" fill="#447FB3"/>
<rect x="1283.00" y="482.80" width="1" height="1.20" fill="#FF6854"/>
<rect x="1286.00" y="482.80" width="1" height="1.20" fill="#FF6854"/>
<rect x="1288.00" y="482.80" width="1" height="1.20" fill="#FF6854"/>
<rect x="1290.00" y="482.80" width="1" height="1.20" fill="#FF6854"/>
<rect x="1292.00" y="482.80" width="1" height="1.20" fill="#FF6854"/>
<rect x="1294.00" y="482.80" width="1" height="1.20" fill="#FF6854"/>
<rect x="1303.00" y="482.80" width="1" height="1.20" fill="#FF6854"/>
<rect x="1305.00" y="482.80" width="1" height="1.20" fill="#FF6854"/>
<rect x="1308.00" y="482.80" width="1" height="1.20" fill="#FF6854"/>
<rect x="1312.00" y="482.80" width="1" height="1.20" fill="#FF6854"/>
<rect x="1316.00" y="482.80" width="1" height="1.20" fill="#FF6854"/>
<rect x="1319.00" y="482.80" width="1" height="1.20" fill="#FF6854"/>
<rect x="1334.00" y="482.80" width="1" height="1.20" fill="#FF6854"/>
<rect x="1336.00" y="482.80" width="1" height="1.20" fill="#FF6854"/>
<rect x="1338.00" y="482.80" width="1" height="1.20" fill="#FF6854"/>
<rect x="1341.00" y="482.80" width="1" height="1.20" fill="#FF6854"/>
<rect x="1343.00" y="482.80" width="1" height="1.20" fill="#FF6854"/>
<rect x="1345.00" y="482.80" width="1" height="1.20" fill="#FF6854"/>
<rect x="1347.00" y="482.80" width="1" height="1.20" fill="#FF6854"/>
<rect x="1354.00" y="482.80" width="1" height="1.20" fill="#FF6854"/>
<rect x="1363.00" y="482.80" width="1" height="1.20" fill="#FF6854"/>
<rect x="1365.00" y="482.80" width="1" height="1.20" fill="#FF6854"/>
<rect x="1367.00" y="482.80" width="1" height="1.20" fill="#FF6854"/>
<rect x="1369.00" y="482.80" width="1" height="1.20" fill="#FF6854"/>
<rect x="1371.00" y="482.80" width="1" height="1.20" fill="#FF6854"/>
<rect x="1380.00" y="482.80" width="1" height="1.20" fill="#FF6854"/>
<rect x="1387.00" y="482.80" width="1" height="1.20" fill="#FF6854"/>
<rect x="1398.00" y="482.80" width="1" height="1.20" fill="#FF6854"/>
<rect x="1400.00" y="482.80" width="1" height="1.20" fill="#FF6854"/>
<rect x="1404.00" y="482.80" width="1" height="1.20" fill="#FF6854"/>
<rect x="1411.00" y="482.80" width="1" height="1.20" fill="#FF6854"/>
<rect x="1413.00" y="482.80" width="1" height="1.20" fill="#FF6854"/>
<rect x="1420.00" y="482.80" width="1" height="1.20" fill="#FF6854"/>
<rect x="1422.00" y="482.80" width="1" height="1.20" fill="#FF6854"/>
<rect x="1424.00" y="482.80" width="1" height="1.20" fill="#FF6854"/>
<rect x="1431.00" y="482.80" width="1" height="1.20" fill="#FF6854"/>
<rect x="1440.00" y="482.80" width="1" height="1.20" fill="#FF6854"/>
<rect x="1442.00" y="482.80" width="1" height="1.20" fill="#FF6854"/>
<rect x="1444.00" y="482.80" width="1" height="1.20" fill="#FF6854"/>
<rect x="1446.00" y="482.80" width="1" height="1.20" fill="#FF6854"/>
<rect x="1453.00" y="482.80" width="1" height="1.20" fill="#FF6854"/>
<rect x="1457.00" y="482.80" width="1" height="1.20" fill="#FF6854"/>
<rect x="1464.00" y="482.80" width="1" height="1.20" fill="#FF6854"/>
<rect x="1466.00" y="482.80" width="1" height="1.20" fill="#FF6854"/>
<rect x="1468.00" y="482.80" width="1" height="1.20" fill="#FF6854"/>
<rect x="1470.00" y="482.80" width="1" height="1.20" fill="#FF6854"/>
<rect x="1475.00" y="482.80" width="1" height="1.20" fill="#FF6854"/>
<rect x="1477.00" y="482.80" width="1" height="1.20" fill="#FF6854"/>
<rect x="1479.00" y="482.80" width="1" height="1.20" fill="#FF6854"/>
<rect x="1484.00" y="482.80" width="1" height="1.20" fill="#FF6854"/>
<rect x="1486.00" y="482.80" width="1" height="1.20" fill="#FF6854"/>
<rect x="1492.00" y="482.80" width="1" height="1.20" fill="#FF6854"/>
<rect x="1497.00" y="482.80" width="1" height="1.20" fill="#FF6854"/>
<rect x="1499.00" y="482.80" width="1" height="1.20" fill="#FF6854"/>
<rect x="1501.00" y="482.80" width="1" height="1.20" fill="#FF6854"/>
<rect x="1503.00" y="482.80" width="1" height="1.20" fill="#FF6854"/>
<rect x="1506.00" y="482.80" width="1" height="1.20" fill="#FF6854"/>
<rect x="1508.00" y="482.80" width="1" height="1.20" fill="#FF6854"/>
<rect x="1510.00" y="482.80" width="1" height="1.20" fill="#FF6854"/>
<rect x="1514.00" y="482.80" width="1" height="1.20" fill="#FF6854"/>
<rect x="1517.00" y="482.80" width="1" height="1.20" fill="#FF6854"/>
<rect x="1523.00" y="482.80" width="1" height="1.20" fill="#FF6854"/>
<rect x="1525.00" y="482.80" width="1" height="1.20" fill="#FF6854"/>
<rect x="1532.00" y="482.80" width="1" height="1.20" fill="#FF6854"/>
<rect x="1536.00" y="482.80" width="1" height="1.20" fill="#FF6854"/>
</g>
<text x="1056.0" y="488.0" text-anchor="end" class="t">0.0</text>
<text x="1839.0" y="488.0" class="t">0.0</text>
<text x="1056.0" y="476.0" text-anchor="end" class="t">26k</text>
<text x="1839.0" y="476.0" class="t">8.3k</text>
<text x="1056.0" y="464.0" text-anchor="end" class="t">52k</text>
<text x="1839.0" y="464.0" class="t">17k</text>
<text x="1056.0" y="453.0" text-anchor="end" class="t">77k</text>
<text x="1839.0" y="453.0" class="t">25k</text>
<text x="1056.0" y="441.0" text-anchor="end" class="t">100k</text>
<text x="1839.0" y="441.0" class="t">33k</text>
<text x="1056.0" y="430.0" text-anchor="end" class="t">130k</text>
<text x="1839.0" y="430.0" class="t">41k</text>
<text x="1056.0" y="418.0" text-anchor="end" class="t">150k</text>
<text x="1839.0" y="418.0" class="t">50k</text>
<text x="1056.0" y="407.0" text-anchor="end" class="t">180k</text>
<text x="1839.0" y="407.0" class="t">58k</text>
<text x="1056.0" y="395.0" text-anchor="end" class="t">210k</text>
<text x="1839.0" y="395.0" class="t">66k</text>
<text x="1056.0" y="384.0" text-anchor="end" class="t">230k</text>
<text x="1839.0" y="384.0" class="t">75k</text>
<text x="1050.5" y="359" class="t">Hits</text>
<text x="1822.5" y="359" class="t">Visitors</text>
<rect x="1347" y="509" width="10" height="10" fill="#447FB3"/><text x="1362" y="518" class="t">Hits</text>
<rect x="1447.5" y="509" width="10" height="10" fill="#FF6854"/><text x="1462.5" y="518" class="t">Visitors</text>
</svg>
<div class="xl" style="left:1032.0px">GET /ver.php HTTP/1.1</div>
<div class="xl" style="left:1109.0px">GET /?p=8654</div>
<div class="xl" style="left:1186.0px">GET /?p=8973</div>
<div class="xl" style="left:1264.0px">GET /?p=8777</div>
<div class="xl" style="left:1341.0px">GET /wp-content/x</div>
<div class="xl" style="left:1418.0px">GET /?p=9653</div>
<div class="xl" style="left:1496.0px">GET /?p=11265</div>
<div class="xl" style="left:1573.0px">GET /?p=4321</div>
<div class="xl" style="left:1650.0px">GET /?p=9906</div>
<div class="xl" style="left:1727.0px">GET /?goto=27</div>
<div class="abs" style="left:100px;top:575px;width:865px;height:2px;background:#ccc"></div>
<div class="abs" style="left:100px;top:577px;width:865px;height:92px;background:#f0f0f0"></div>
<div class="abs" style="left:100px;top:669px;width:865px;height:1px;background:#ddd"></div>
<div class="abs" style="left:100px;top:702px;width:865px;height:32px;background:#f6f6f6"></div>
<div class="abs" style="left:100px;top:766px;width:865px;height:32px;background:#f6f6f6"></div>
<div class="abs" style="left:100px;top:830px;width:865px;height:32px;background:#f6f6f6"></div>
<div class="abs" style="left:100px;top:894px;width:865px;height:32px;background:#f6f6f6"></div>
<div class="abs" style="left:129px;top:670px;width:1px;height:264px;background:#e8e8e8"></div>
<div class="abs" style="left:233px;top:670px;width:1px;height:264px;background:#e8e8e8"></div>
<div class="abs" style="left:335px;top:670px;width:1px;height:264px;background:#e8e8e8"></div>
<div class="abs" style="left:447px;top:670px;width:1px;height:264px;background:#e8e8e8"></div>
<div class="tx b" style="left:113.30px;top:550.00px;font-size:14.00px;">#</div>
<div class="tx b" style="right:1694.70px;top:550.00px;font-size:14.00px;">Hits <svg class="srt" width="8" height="12" viewBox="0 0 8 12"><path d="M0,5 L4,0.5 L8,5Z M0,7 L4,11.5 L8,7Z" fill="#333"/></svg></div>
<div class="tx b" style="right:1593.00px;top:550.00px;font-size:14.00px;">Visitors <svg class="srt" width="8" height="12" viewBox="0 0 8 12"><path d="M0,5 L4,0.5 L8,5Z M0,7 L4,11.5 L8,7Z" fill="#333"/></svg></div>
<div class="tx b" style="right:1480.00px;top:550.00px;font-size:14.00px;">Tx. Amount <svg class="srt" width="8" height="12" viewBox="0 0 8 12"><path d="M0,5 L4,0.5 L8,5Z M0,7 L4,11.5 L8,7Z" fill="#333"/></svg></div>
<div class="tx b" style="left:456.40px;top:550.00px;font-size:14.00px;">Data <svg class="srt" width="8" height="12" viewBox="0 0 8 12" style="margin-left:-1px"><path d="M0,3.4 L4,7.9 L8,3.4Z" fill="#333"/></svg></div>
<div class="tx " style="right:1695.00px;top:593.76px;font-size:18.00px;">5 999 683</div>
<div class="tx mx" style="right:1695.00px;top:617.90px;font-size:11.70px;">Max: 427 629</div>
<div class="tx mx" style="right:1695.00px;top:636.90px;font-size:11.70px;">Min: 144 028</div>
<div class="tx " style="right:1593.00px;top:593.76px;font-size:18.00px;">122 510</div>
<div class="tx mx" style="right:1593.00px;top:617.90px;font-size:11.70px;">Max: 8 958</div>
<div class="tx mx" style="right:1593.00px;top:636.90px;font-size:11.70px;">Min: 3 429</div>
<div class="tx " style="right:1480.00px;top:593.76px;font-size:18.00px;">340.94 GiB</div>
<div class="tx mx" style="right:1480.00px;top:617.90px;font-size:11.70px;">Max: 24.45 GiB</div>
<div class="tx mx" style="right:1480.00px;top:636.90px;font-size:11.70px;">Min: 8.85 GiB</div>
<div class="tx " style="right:1799.00px;top:679.80px;font-size:11.70px;"><span style="color:#999">1</span></div>
<div class="tx " style="right:1695.00px;top:679.80px;font-size:11.70px;">144 028 <span class="mut">(2.40%)</span></div>
<div class="tx " style="right:1593.00px;top:679.80px;font-size:11.70px;">3 429 <span class="mut">(2.80%)</span></div>
<div class="tx " style="right:1480.00px;top:679.80px;font-size:11.70px;">8.85 GiB <span class="mut">(2.60%)</span></div>
<div class="tx " style="left:456.80px;top:679.80px;font-size:11.70px;">04/Jun/2020</div>
<div class="tx " style="right:1799.00px;top:711.80px;font-size:11.70px;"><span style="color:#999">2</span></div>
<div class="tx " style="right:1695.00px;top:711.80px;font-size:11.70px;">389 462 <span class="mut">(6.49%)</span></div>
<div class="tx " style="right:1593.00px;top:711.80px;font-size:11.70px;">7 556 <span class="mut">(6.17%)</span></div>
<div class="tx " style="right:1480.00px;top:711.80px;font-size:11.70px;">21.76 GiB <span class="mut">(6.38%)</span></div>
<div class="tx " style="left:456.80px;top:711.80px;font-size:11.70px;">03/Jun/2020</div>
<div class="tx " style="right:1799.00px;top:743.80px;font-size:11.70px;"><span style="color:#999">3</span></div>
<div class="tx " style="right:1695.00px;top:743.80px;font-size:11.70px;">397 994 <span class="mut">(6.63%)</span></div>
<div class="tx " style="right:1593.00px;top:743.80px;font-size:11.70px;">7 632 <span class="mut">(6.23%)</span></div>
<div class="tx " style="right:1480.00px;top:743.80px;font-size:11.70px;">20.92 GiB <span class="mut">(6.14%)</span></div>
<div class="tx " style="left:456.80px;top:743.80px;font-size:11.70px;">02/Jun/2020</div>
<div class="tx " style="right:1799.00px;top:775.80px;font-size:11.70px;"><span style="color:#999">4</span></div>
<div class="tx " style="right:1695.00px;top:775.80px;font-size:11.70px;">397 561 <span class="mut">(6.63%)</span></div>
<div class="tx " style="right:1593.00px;top:775.80px;font-size:11.70px;">7 538 <span class="mut">(6.15%)</span></div>
<div class="tx " style="right:1480.00px;top:775.80px;font-size:11.70px;">21.97 GiB <span class="mut">(6.45%)</span></div>
<div class="tx " style="left:456.80px;top:775.80px;font-size:11.70px;">01/Jun/2020</div>
<div class="tx " style="right:1799.00px;top:807.80px;font-size:11.70px;"><span style="color:#999">5</span></div>
<div class="tx " style="right:1695.00px;top:807.80px;font-size:11.70px;">349 984 <span class="mut">(5.83%)</span></div>
<div class="tx " style="right:1593.00px;top:807.80px;font-size:11.70px;">6 565 <span class="mut">(5.36%)</span></div>
<div class="tx " style="right:1480.00px;top:807.80px;font-size:11.70px;">20.46 GiB <span class="mut">(6.00%)</span></div>
<div class="tx " style="left:456.80px;top:807.80px;font-size:11.70px;">31/May/2020</div>
<div class="tx " style="right:1799.00px;top:839.80px;font-size:11.70px;"><span style="color:#999">6</span></div>
<div class="tx " style="right:1695.00px;top:839.80px;font-size:11.70px;">356 041 <span class="mut">(5.93%)</span></div>
<div class="tx " style="right:1593.00px;top:839.80px;font-size:11.70px;">6 244 <span class="mut">(5.10%)</span></div>
<div class="tx " style="right:1480.00px;top:839.80px;font-size:11.70px;">21.23 GiB <span class="mut">(6.23%)</span></div>
<div class="tx " style="left:456.80px;top:839.80px;font-size:11.70px;">30/May/2020</div>
<div class="tx " style="right:1799.00px;top:871.80px;font-size:11.70px;"><span style="color:#999">7</span></div>
<div class="tx " style="right:1695.00px;top:871.80px;font-size:11.70px;">372 377 <span class="mut">(6.21%)</span></div>
<div class="tx " style="right:1593.00px;top:871.80px;font-size:11.70px;">7 099 <span class="mut">(5.79%)</span></div>
<div class="tx " style="right:1480.00px;top:871.80px;font-size:11.70px;">21.24 GiB <span class="mut">(6.23%)</span></div>
<div class="tx " style="left:456.80px;top:871.80px;font-size:11.70px;">29/May/2020</div>
<div class="tx " style="right:1799.00px;top:903.80px;font-size:11.70px;"><span style="color:#999">8</span></div>
<div class="tx " style="right:1695.00px;top:903.80px;font-size:11.70px;">390 800 <span class="mut">(6.51%)</span></div>
<div class="tx " style="right:1593.00px;top:903.80px;font-size:11.70px;">8 198 <span class="mut">(6.69%)</span></div>
<div class="tx " style="right:1480.00px;top:903.80px;font-size:11.70px;">21.7 GiB <span class="mut">(6.36%)</span></div>
<div class="tx " style="left:456.80px;top:903.80px;font-size:11.70px;">28/May/2020</div>
<div class="tx " style="right:1799.00px;top:935.80px;font-size:11.70px;"><span style="color:#999">9</span></div>
<div class="tx " style="right:1695.00px;top:935.80px;font-size:11.70px;">384 100 <span class="mut">(6.40%)</span></div>
<div class="tx " style="right:1593.00px;top:935.80px;font-size:11.70px;">8 709 <span class="mut">(7.11%)</span></div>
<div class="tx " style="right:1480.00px;top:935.80px;font-size:11.70px;">21.5 GiB <span class="mut">(6.31%)</span></div>
<div class="tx " style="left:456.80px;top:935.80px;font-size:11.70px;">27/May/2020</div>
<div class="tx " style="left:456.40px;top:593.76px;font-size:18.00px;">16 <span class="mx" style="font-size:11.7px;margin-left:-2px">Total</span></div>
<div class="abs" style="left:1015px;top:575px;width:865px;height:2px;background:#ccc"></div>
<div class="abs" style="left:1015px;top:577px;width:865px;height:92px;background:#f0f0f0"></div>
<div class="abs" style="left:1015px;top:669px;width:865px;height:1px;background:#ddd"></div>
<div class="abs" style="left:1015px;top:702px;width:865px;height:32px;background:#f6f6f6"></div>
<div class="abs" style="left:1015px;top:766px;width:865px;height:32px;background:#f6f6f6"></div>
<div class="abs" style="left:1015px;top:830px;width:865px;height:32px;background:#f6f6f6"></div>
<div class="abs" style="left:1015px;top:894px;width:865px;height:32px;background:#f6f6f6"></div>
<div class="abs" style="left:1044px;top:670px;width:1px;height:264px;background:#e8e8e8"></div>
<div class="abs" style="left:1148px;top:670px;width:1px;height:264px;background:#e8e8e8"></div>
<div class="abs" style="left:1252px;top:670px;width:1px;height:264px;background:#e8e8e8"></div>
<div class="abs" style="left:1373px;top:670px;width:1px;height:264px;background:#e8e8e8"></div>
<div class="abs" style="left:1451px;top:670px;width:1px;height:264px;background:#e8e8e8"></div>
<div class="abs" style="left:1536px;top:670px;width:1px;height:264px;background:#e8e8e8"></div>
<div class="tx b" style="left:1028.30px;top:550.00px;font-size:14.00px;">#</div>
<div class="tx b" style="right:779.80px;top:550.00px;font-size:14.00px;">Hits <svg class="srt" width="8" height="12" viewBox="0 0 8 12" style="margin-left:0px"><path d="M0,3.6 L4,8.1 L8,3.6Z" fill="#333"/></svg></div>
<div class="tx b" style="right:676.30px;top:550.00px;font-size:14.00px;">Visitors <svg class="srt" width="8" height="12" viewBox="0 0 8 12"><path d="M0,5 L4,0.5 L8,5Z M0,7 L4,11.5 L8,7Z" fill="#333"/></svg></div>
<div class="tx b" style="right:555.30px;top:550.00px;font-size:14.00px;">Tx. Amount <svg class="srt" width="8" height="12" viewBox="0 0 8 12"><path d="M0,5 L4,0.5 L8,5Z M0,7 L4,11.5 L8,7Z" fill="#333"/></svg></div>
<div class="tx b" style="left:1381.90px;top:550.00px;font-size:14.00px;">Method <svg class="srt" width="8" height="12" viewBox="0 0 8 12"><path d="M0,5 L4,0.5 L8,5Z M0,7 L4,11.5 L8,7Z" fill="#333"/></svg></div>
<div class="tx b" style="left:1459.20px;top:550.00px;font-size:14.00px;">Protocol <svg class="srt" width="8" height="12" viewBox="0 0 8 12"><path d="M0,5 L4,0.5 L8,5Z M0,7 L4,11.5 L8,7Z" fill="#333"/></svg></div>
<div class="tx b" style="left:1544.30px;top:550.00px;font-size:14.00px;">Data <svg class="srt" width="8" height="12" viewBox="0 0 8 12"><path d="M0,5 L4,0.5 L8,5Z M0,7 L4,11.5 L8,7Z" fill="#333"/></svg></div>
<div class="tx " style="right:779.80px;top:593.76px;font-size:18.00px;">1 345 962</div>
<div class="tx mx" style="right:779.80px;top:617.90px;font-size:11.70px;">Max: 257 976</div>
<div class="tx mx" style="right:779.80px;top:636.90px;font-size:11.70px;">Min: 1</div>
<div class="tx " style="right:676.30px;top:593.76px;font-size:18.00px;">580 481</div>
<div class="tx mx" style="right:676.30px;top:617.90px;font-size:11.70px;">Max: 82 853</div>
<div class="tx mx" style="right:676.30px;top:636.90px;font-size:11.70px;">Min: 1</div>
<div class="tx " style="right:555.30px;top:593.76px;font-size:18.00px;">41.04 GiB</div>
<div class="tx mx" style="right:555.30px;top:617.90px;font-size:11.70px;">Max: 4.6 GiB</div>
<div class="tx mx" style="right:555.30px;top:636.90px;font-size:11.70px;">Min: 0 Byte</div>
<div class="tx " style="right:884.00px;top:679.80px;font-size:11.70px;"><span style="color:#999">1</span></div>
<div class="tx " style="right:780.40px;top:679.80px;font-size:11.70px;">257 976 <span class="mut">(4.30%)</span></div>
<div class="tx " style="right:676.40px;top:679.80px;font-size:11.70px;">52 645 <span class="mut">(42.97%)</span></div>
<div class="tx " style="right:555.60px;top:679.80px;font-size:11.70px;">35.17 MiB <span class="mut">(0.01%)</span></div>
<div class="tx " style="left:1382.00px;top:679.80px;font-size:11.70px;">GET</div>
<div class="tx " style="left:1460.20px;top:679.80px;font-size:11.70px;">HTTP/1.0</div>
<div class="tx " style="left:1544.60px;top:679.80px;font-size:11.70px;"><span style="display:inline-block;max-width:335px;overflow:hidden;vertical-align:top">/ver.php</span></div>
<div class="tx " style="right:884.00px;top:711.80px;font-size:11.70px;"><span style="color:#999">2</span></div>
<div class="tx " style="right:780.40px;top:711.80px;font-size:11.70px;">241 473 <span class="mut">(4.02%)</span></div>
<div class="tx " style="right:676.40px;top:711.80px;font-size:11.70px;">52 013 <span class="mut">(42.46%)</span></div>
<div class="tx " style="right:555.60px;top:711.80px;font-size:11.70px;">32.7 MiB <span class="mut">(0.01%)</span></div>
<div class="tx " style="left:1382.00px;top:711.80px;font-size:11.70px;">GET</div>
<div class="tx " style="left:1460.20px;top:711.80px;font-size:11.70px;">HTTP/1.0</div>
<div class="tx " style="left:1544.60px;top:711.80px;font-size:11.70px;"><span style="display:inline-block;max-width:335px;overflow:hidden;vertical-align:top">/hor.php</span></div>
<div class="tx " style="right:884.00px;top:743.80px;font-size:11.70px;"><span style="color:#999">3</span></div>
<div class="tx " style="right:780.40px;top:743.80px;font-size:11.70px;">154 520 <span class="mut">(2.58%)</span></div>
<div class="tx " style="right:676.40px;top:743.80px;font-size:11.70px;">82 853 <span class="mut">(67.63%)</span></div>
<div class="tx " style="right:555.60px;top:743.80px;font-size:11.70px;">31.09 KiB <span class="mut">(0.00%)</span></div>
<div class="tx " style="left:1382.00px;top:743.80px;font-size:11.70px;">POST</div>
<div class="tx " style="left:1460.20px;top:743.80px;font-size:11.70px;">HTTP/1.0</div>
<div class="tx " style="left:1544.60px;top:743.80px;font-size:11.70px;"><span style="display:inline-block;max-width:335px;overflow:hidden;vertical-align:top">/?spu_action=spu_load</span></div>
<div class="tx " style="right:884.00px;top:775.80px;font-size:11.70px;"><span style="color:#999">4</span></div>
<div class="tx " style="right:780.40px;top:775.80px;font-size:11.70px;">91 320 <span class="mut">(1.52%)</span></div>
<div class="tx " style="right:676.40px;top:775.80px;font-size:11.70px;">19 261 <span class="mut">(15.72%)</span></div>
<div class="tx " style="right:555.60px;top:775.80px;font-size:11.70px;">12.57 MiB <span class="mut">(0.00%)</span></div>
<div class="tx " style="left:1382.00px;top:775.80px;font-size:11.70px;">GET</div>
<div class="tx " style="left:1460.20px;top:775.80px;font-size:11.70px;">HTTP/1.0</div>
<div class="tx " style="left:1544.60px;top:775.80px;font-size:11.70px;"><span style="display:inline-block;max-width:335px;overflow:hidden;vertical-align:top">/hwv2.php</span></div>
<div class="tx " style="right:884.00px;top:807.80px;font-size:11.70px;"><span style="color:#999">5</span></div>
<div class="tx " style="right:780.40px;top:807.80px;font-size:11.70px;">85 625 <span class="mut">(1.43%)</span></div>
<div class="tx " style="right:676.40px;top:807.80px;font-size:11.70px;">18 988 <span class="mut">(15.50%)</span></div>
<div class="tx " style="right:555.60px;top:807.80px;font-size:11.70px;">11.61 MiB <span class="mut">(0.00%)</span></div>
<div class="tx " style="left:1382.00px;top:807.80px;font-size:11.70px;">GET</div>
<div class="tx " style="left:1460.20px;top:807.80px;font-size:11.70px;">HTTP/1.0</div>
<div class="tx " style="left:1544.60px;top:807.80px;font-size:11.70px;"><span style="display:inline-block;max-width:335px;overflow:hidden;vertical-align:top">/hw2.php</span></div>
<div class="tx " style="right:884.00px;top:839.80px;font-size:11.70px;"><span style="color:#999">6</span></div>
<div class="tx " style="right:780.40px;top:839.80px;font-size:11.70px;">77 193 <span class="mut">(1.29%)</span></div>
<div class="tx " style="right:676.40px;top:839.80px;font-size:11.70px;">69 023 <span class="mut">(56.34%)</span></div>
<div class="tx " style="right:555.60px;top:839.80px;font-size:11.70px;">4.6 GiB <span class="mut">(1.35%)</span></div>
<div class="tx " style="left:1382.00px;top:839.80px;font-size:11.70px;">GET</div>
<div class="tx " style="left:1460.20px;top:839.80px;font-size:11.70px;">HTTP/1.0</div>
<div class="tx " style="left:1544.60px;top:839.80px;font-size:11.70px;"><span style="display:inline-block;max-width:335px;overflow:hidden;vertical-align:top">/wp-content/themes/snowfall/fonts/fontawesome-webfont.woff2?v=4.7.0</span></div>
<div class="tx " style="right:884.00px;top:871.80px;font-size:11.70px;"><span style="color:#999">7</span></div>
<div class="tx " style="right:780.40px;top:871.80px;font-size:11.70px;">36 210 <span class="mut">(0.60%)</span></div>
<div class="tx " style="right:676.40px;top:871.80px;font-size:11.70px;">31 414 <span class="mut">(25.64%)</span></div>
<div class="tx " style="right:555.60px;top:871.80px;font-size:11.70px;">2.55 GiB <span class="mut">(0.75%)</span></div>
<div class="tx " style="left:1382.00px;top:871.80px;font-size:11.70px;">GET</div>
<div class="tx " style="left:1460.20px;top:871.80px;font-size:11.70px;">HTTP/1.0</div>
<div class="tx " style="left:1544.60px;top:871.80px;font-size:11.70px;"><span style="display:inline-block;max-width:335px;overflow:hidden;vertical-align:top">/wp-content/plugins/subscribe-to-comments-reloaded/includes/fonts/x.woff</span></div>
<div class="tx " style="right:884.00px;top:903.80px;font-size:11.70px;"><span style="color:#999">8</span></div>
<div class="tx " style="right:780.40px;top:903.80px;font-size:11.70px;">31 604 <span class="mut">(0.53%)</span></div>
<div class="tx " style="right:676.40px;top:903.80px;font-size:11.70px;">10 834 <span class="mut">(8.84%)</span></div>
<div class="tx " style="right:555.60px;top:903.80px;font-size:11.70px;">728.57 MiB <span class="mut">(0.21%)</span></div>
<div class="tx " style="left:1382.00px;top:903.80px;font-size:11.70px;">GET</div>
<div class="tx " style="left:1460.20px;top:903.80px;font-size:11.70px;">HTTP/1.0</div>
<div class="tx " style="left:1544.60px;top:903.80px;font-size:11.70px;"><span style="display:inline-block;max-width:335px;overflow:hidden;vertical-align:top">/</span></div>
<div class="tx " style="right:884.00px;top:935.80px;font-size:11.70px;"><span style="color:#999">9</span></div>
<div class="tx " style="right:780.40px;top:935.80px;font-size:11.70px;">29 110 <span class="mut">(0.49%)</span></div>
<div class="tx " style="right:676.40px;top:935.80px;font-size:11.70px;">9 120 <span class="mut">(7.44%)</span></div>
<div class="tx " style="right:555.60px;top:935.80px;font-size:11.70px;">700.1 MiB <span class="mut">(0.20%)</span></div>
<div class="tx " style="left:1382.00px;top:935.80px;font-size:11.70px;">GET</div>
<div class="tx " style="left:1460.20px;top:935.80px;font-size:11.70px;">HTTP/1.0</div>
<div class="tx " style="left:1544.60px;top:935.80px;font-size:11.70px;"><span style="display:inline-block;max-width:335px;overflow:hidden;vertical-align:top">/?p=1</span></div>
<div class="tx " style="left:1544.30px;top:593.76px;font-size:18.00px;">17 782 <span class="mx" style="font-size:11.7px;margin-left:-2px">Total</span></div>
<div class="abs" style="left:1905px;top:0;width:13px;height:934px;background:#f1f1f1"></div><div class="abs" style="left:1918px;top:0;width:1px;height:934px;background:#fafafa"></div><div class="abs" style="left:1919px;top:0;width:1px;height:934px;background:#2a2a2a"></div>
<div class="abs" style="left:1907px;top:11px;width:11px;height:131px;background:#c1c1c1"></div>
<svg class="abs" style="left:1905px;top:0" width="15" height="934"><path d="M3.8,6 L7.5,2 L11.2,6Z" fill="#a3a3a3"/><path d="M3.8,925 L7.5,929.2 L11.2,925Z" fill="#505050"/></svg>
<svg class="abs" style="left:0;top:0" width="560" height="60"><path d="M509.2,31.6 L509.2,45 L512.2,42.1 L514.5,47.3 L516.6,46.5 L514.3,41.3 L518.3,41.1 Z" fill="#000" stroke="#fff" stroke-width="2" stroke-linejoin="miter" paint-order="stroke"/></svg>
</body></html>
